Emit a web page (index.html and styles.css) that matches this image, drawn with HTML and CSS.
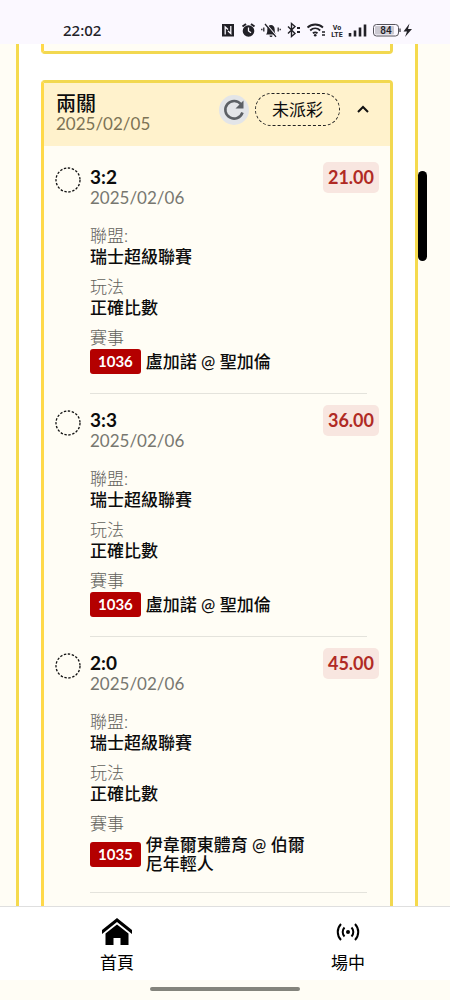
FILE: index.html
```html
<!DOCTYPE html>
<html lang="zh-Hant">
<head>
<meta charset="utf-8">
<meta name="viewport" content="width=device-width, initial-scale=1">
<title>兩關</title>
<link rel="stylesheet" href="styles.css">
</head>
<body>
<header class="status">
  <time class="clock">22:02</time>
  <svg class="status-icons" width="192" height="20" viewBox="0 0 192 20" aria-hidden="true">
    <!-- NFC -->
    <path d="M1 4h12v12.500H1z" fill="#222127"/>
    <path d="M4.200 14.500V7L7 9.500M9.800 6v7.500L7 11" fill="none" stroke="#fbf8ff" stroke-width="1.300"/>
    <!-- alarm -->
    <circle cx="27.500" cy="11" r="5.800" fill="#222127"/>
    <path d="M21.500 6.500l3.500-2.500M33.500 6.500L30 4" stroke="#222127" stroke-width="2"/>
    <path d="M27.500 7.500V11l2.500 1.800" fill="none" stroke="#fbf8ff" stroke-width="1.300"/>
    <!-- muted bell -->
    <path d="M45 14.500c1.300-1.200 1.300-3 1.300-5C46.300 6.500 48 5 50 5s3.700 1.500 3.700 4.500c0 2 0 3.800 1.300 5zM48.500 15.500h3a1.500 1.500 0 0 1-3 0z" fill="#222127"/>
    <path d="M45.500 4.500l10 11.500" stroke="#fbf8ff" stroke-width="1.200"/>
    <path d="M44 4l11 12.800M42.800 7.500v4M40.800 8.700v1.600M57.200 7.500v4M59.200 8.700v1.600" stroke="#222127" stroke-width="1.300"/>
    <!-- bluetooth -->
    <path d="M67 6.500l7 7-3.500 3v-13l3.500 3-7 7" fill="none" stroke="#222127" stroke-width="1.400"/>
    <path d="M76 8h3M76 12h3" stroke="#222127" stroke-width="1.800"/>
    <!-- wifi -->
    <path d="M86.500 7.500c4.500-4 11-4 15.500 0M89.200 10.500c3-2.800 7-2.800 10 0M91.900 13.300c1.400-1.200 3.200-1.200 4.600 0" fill="none" stroke="#222127" stroke-width="1.800"/>
    <circle cx="94.200" cy="15.300" r="1.300" fill="#222127"/>
    <path d="M101 12h3M101 15h3" stroke="#222127" stroke-width="1.600"/>
    <text class="tiny" x="116" y="10">Vo</text>
    <text class="tiny" x="116" y="17">LTE</text>
    <!-- signal -->
    <path d="M129 13v3.500M134 10.500v6M139 7.500v9M144 4.500v12" stroke="#222127" stroke-width="2.600"/>
    <!-- battery -->
    <rect x="152.500" y="4.500" width="25" height="11.500" rx="3" fill="#fbf8ff" stroke="#55535a"/>
    <rect x="154" y="6" width="19" height="8.500" rx="1" fill="#cbc9d1"/>
    <path d="M179 8.500v3.500" stroke="#55535a" stroke-width="1.500"/>
    <text class="battery" x="165" y="14">84</text>
    <path d="M188.500 3.500l-6 8h3.500l-2 5.500 7-8h-4z" fill="#222127"/>
  </svg>
</header>

<main class="scroller">
  <div class="panel">
    <section class="card card-previous"></section>
    <section class="card">
      <div class="card-head">
        <div class="card-title">
          <h1>兩關</h1>
          <p>2025/02/05</p>
        </div>
        <div class="card-tools">
          <button class="refresh" aria-label="重新整理">
            <svg width="30" height="30" viewBox="0 0 30 30"><path d="M22 9.300A8.800 8.800 0 1 0 23.500 17.500" fill="none" stroke="#5c6065" stroke-width="2.600"/><path d="M24.500 5.500v8H16.500z" fill="#5c6065"/></svg>
          </button>
          <span class="pill">未派彩</span>
          <button class="toggle" aria-label="收合">
            <svg width="14" height="14" viewBox="0 0 14 14"><path d="M2 9l5-5 5 5" fill="none" stroke="#111" stroke-width="2"/></svg>
          </button>
        </div>
      </div>
      <div class="bets">
        <article class="bet">
          <svg class="ring" width="26" height="26" viewBox="0 0 26 26"><circle cx="13" cy="13" r="12"/></svg>
          <div class="bet-body">
            <h2>3:2</h2>
            <p class="date">2025/02/06</p>
            <dl>
              <dt>聯盟:</dt><dd>瑞士超級聯賽</dd>
              <dt>玩法</dt><dd>正確比數</dd>
              <dt>賽事</dt><dd class="match"><span class="code">1036</span><span class="teams">盧加諾 @ 聖加倫</span></dd>
            </dl>
          </div>
          <span class="odds">21.00</span>
        </article>
        <article class="bet">
          <svg class="ring" width="26" height="26" viewBox="0 0 26 26"><circle cx="13" cy="13" r="12"/></svg>
          <div class="bet-body">
            <h2>3:3</h2>
            <p class="date">2025/02/06</p>
            <dl>
              <dt>聯盟:</dt><dd>瑞士超級聯賽</dd>
              <dt>玩法</dt><dd>正確比數</dd>
              <dt>賽事</dt><dd class="match"><span class="code">1036</span><span class="teams">盧加諾 @ 聖加倫</span></dd>
            </dl>
          </div>
          <span class="odds">36.00</span>
        </article>
        <article class="bet">
          <svg class="ring" width="26" height="26" viewBox="0 0 26 26"><circle cx="13" cy="13" r="12"/></svg>
          <div class="bet-body">
            <h2>2:0</h2>
            <p class="date">2025/02/06</p>
            <dl>
              <dt>聯盟:</dt><dd>瑞士超級聯賽</dd>
              <dt>玩法</dt><dd>正確比數</dd>
              <dt>賽事</dt><dd class="match"><span class="code">1035</span><span class="teams">伊韋爾東體育 @ 伯爾尼年輕人</span></dd>
            </dl>
          </div>
          <span class="odds">45.00</span>
        </article>
      </div>
    </section>
  </div>
  <div class="thumb"></div>
</main>

<nav class="tabs">
  <a href="#home">
    <svg width="32" height="28" viewBox="0 0 32 28"><path d="M16 0L1 12v4L16 4l15 12v-4z"/><path d="M16 6.500L4.500 15.500V27h8v-7h7v7h8V15.500z"/></svg>
    首頁
  </a>
  <a href="#live">
    <svg width="32" height="28" viewBox="0 0 32 28" fill="none" stroke="#000" stroke-width="2"><circle cx="16" cy="14" r="2" fill="#000" stroke="none"/><path d="M12.500 9.500a6.500 6.500 0 0 0 0 9M19.500 9.500a6.500 6.500 0 0 1 0 9M9 6a11.500 11.500 0 0 0 0 16M23 6a11.500 11.500 0 0 1 0 16"/></svg>
    場中
  </a>
</nav>
<footer class="gesture"><span></span></footer>
</body>
</html>
```

FILE: styles.css
```css
* { box-sizing: border-box; }

body {
  margin: 0;
  height: 100vh;
  display: flex;
  flex-direction: column;
  overflow: hidden;
  background: #fffdf5;
  color: #0c0c0c;
  font-family: Lato, "Noto Sans CJK TC", sans-serif;
  font-size: 17px;
  line-height: 21px;
}

h1, h2, p, dl, dd { margin: 0; }

button {
  padding: 0;
  border: 0;
  background: none;
  display: flex;
  align-items: center;
  justify-content: center;
}

.status {
  flex: none;
  height: 44px;
  padding: 16px 37px 0 63px;
  display: flex;
  justify-content: space-between;
  align-items: flex-start;
  background: #fbf8ff;
  color: #222127;
}

.clock {
  font-family: "Noto Sans", sans-serif;
  font-size: 15px;
  font-weight: 500;
  line-height: 28px;
}

.status-icons { margin-top: 4px; }

.tiny {
  font: 700 7px Roboto, sans-serif;
  fill: #222127;
  text-anchor: middle;
}

.battery {
  font: 500 10px Roboto, sans-serif;
  fill: #222127;
  text-anchor: middle;
}

.scroller {
  flex: 1;
  min-height: 0;
  position: relative;
  overflow: hidden;
}

.panel {
  margin: 0 32px 0 16px;
  padding: 0 22px;
  border: solid #f5da4d;
  border-width: 0 3px;
  background: #fff;
}

.card {
  border: 3px solid #f2d850;
  border-left-color: #ffd94a;
  border-radius: 4px;
  background: #fffdf5;
}

.card-previous {
  height: 10px;
  margin-bottom: 26px;
  border-top: 0;
  border-radius: 0 0 4px 4px;
}

.card-head {
  display: flex;
  justify-content: space-between;
  align-items: flex-start;
  padding: 10px 20px 12px 12px;
  background: #fff2cc;
}

.card-title h1 {
  font-size: 20px;
  font-weight: 500;
  line-height: 20px;
}

.card-title p { color: #7c7355; }

.card-tools {
  display: flex;
  align-items: center;
  gap: 6px;
}

.refresh {
  width: 30px;
  height: 30px;
  border-radius: 50%;
  background: #e3e5e8;
}

.pill {
  padding: 5px 16px;
  border: 1px dashed #222;
  border-radius: 17px;
}

.toggle {
  margin-left: 10px;
}

.bets { padding: 6px 11px 24px; }

.bet {
  display: grid;
  grid-template-columns: 26px 1fr;
  column-gap: 9px;
  align-items: start;
  position: relative;
  padding: 15px 0 20px;
  border-bottom: 1px solid transparent;
}

.bet::after {
  content: "";
  position: absolute;
  left: 35px;
  right: 12px;
  bottom: 0;
  height: 1px;
  background: #e4e3dc;
}

.ring {
  fill: none;
  stroke: #111;
  stroke-width: 1.3;
  stroke-dasharray: 2.4 1.6;
  display: block;
}

.bet-body {
  grid-area: 1 / 2;
}

.bet-body h2 {
  font-size: 19px;
  font-weight: 700;
  line-height: 20px;
}

.date { color: #777770; }

dl { margin-top: 17px; }

dt {
  color: #62625c;
  font-weight: 300;
}

dd { font-weight: 500; }

dd + dt { margin-top: 9px; }

.match {
  display: flex;
  align-items: center;
  gap: 5px;
  margin-top: 1px;
}

.code {
  flex: none;
  padding: 0 8px;
  border-radius: 3px;
  background: #b40000;
  color: #fff;
  font-size: 15px;
  font-weight: 700;
  line-height: 25px;
}

.teams {
  max-width: 172px;
  line-height: 19px;
}

.odds {
  grid-area: 1 / 2;
  justify-self: end;
  margin-top: -5px;
  padding: 0 5px;
  border-radius: 5px;
  background: #f8e6e0;
  color: #b02a24;
  font-size: 18px;
  font-weight: 700;
  line-height: 31px;
}

.thumb {
  position: absolute;
  top: 127px;
  right: 23px;
  width: 9px;
  height: 90px;
  border-radius: 5px;
  background: #000;
}

.tabs {
  flex: none;
  display: flex;
  justify-content: space-between;
  padding: 11px 85px 7px 100px;
  border-top: 1px solid #dfdfdf;
  background: #fff;
}

.tabs a {
  display: flex;
  flex-direction: column;
  align-items: center;
  gap: 6px;
  color: #000;
  text-decoration: none;
}

.gesture {
  flex: none;
  height: 20px;
  display: flex;
  justify-content: center;
  padding-top: 7px;
}

.gesture span {
  width: 150px;
  height: 4px;
  border-radius: 2px;
  background: #84847c;
}
```
